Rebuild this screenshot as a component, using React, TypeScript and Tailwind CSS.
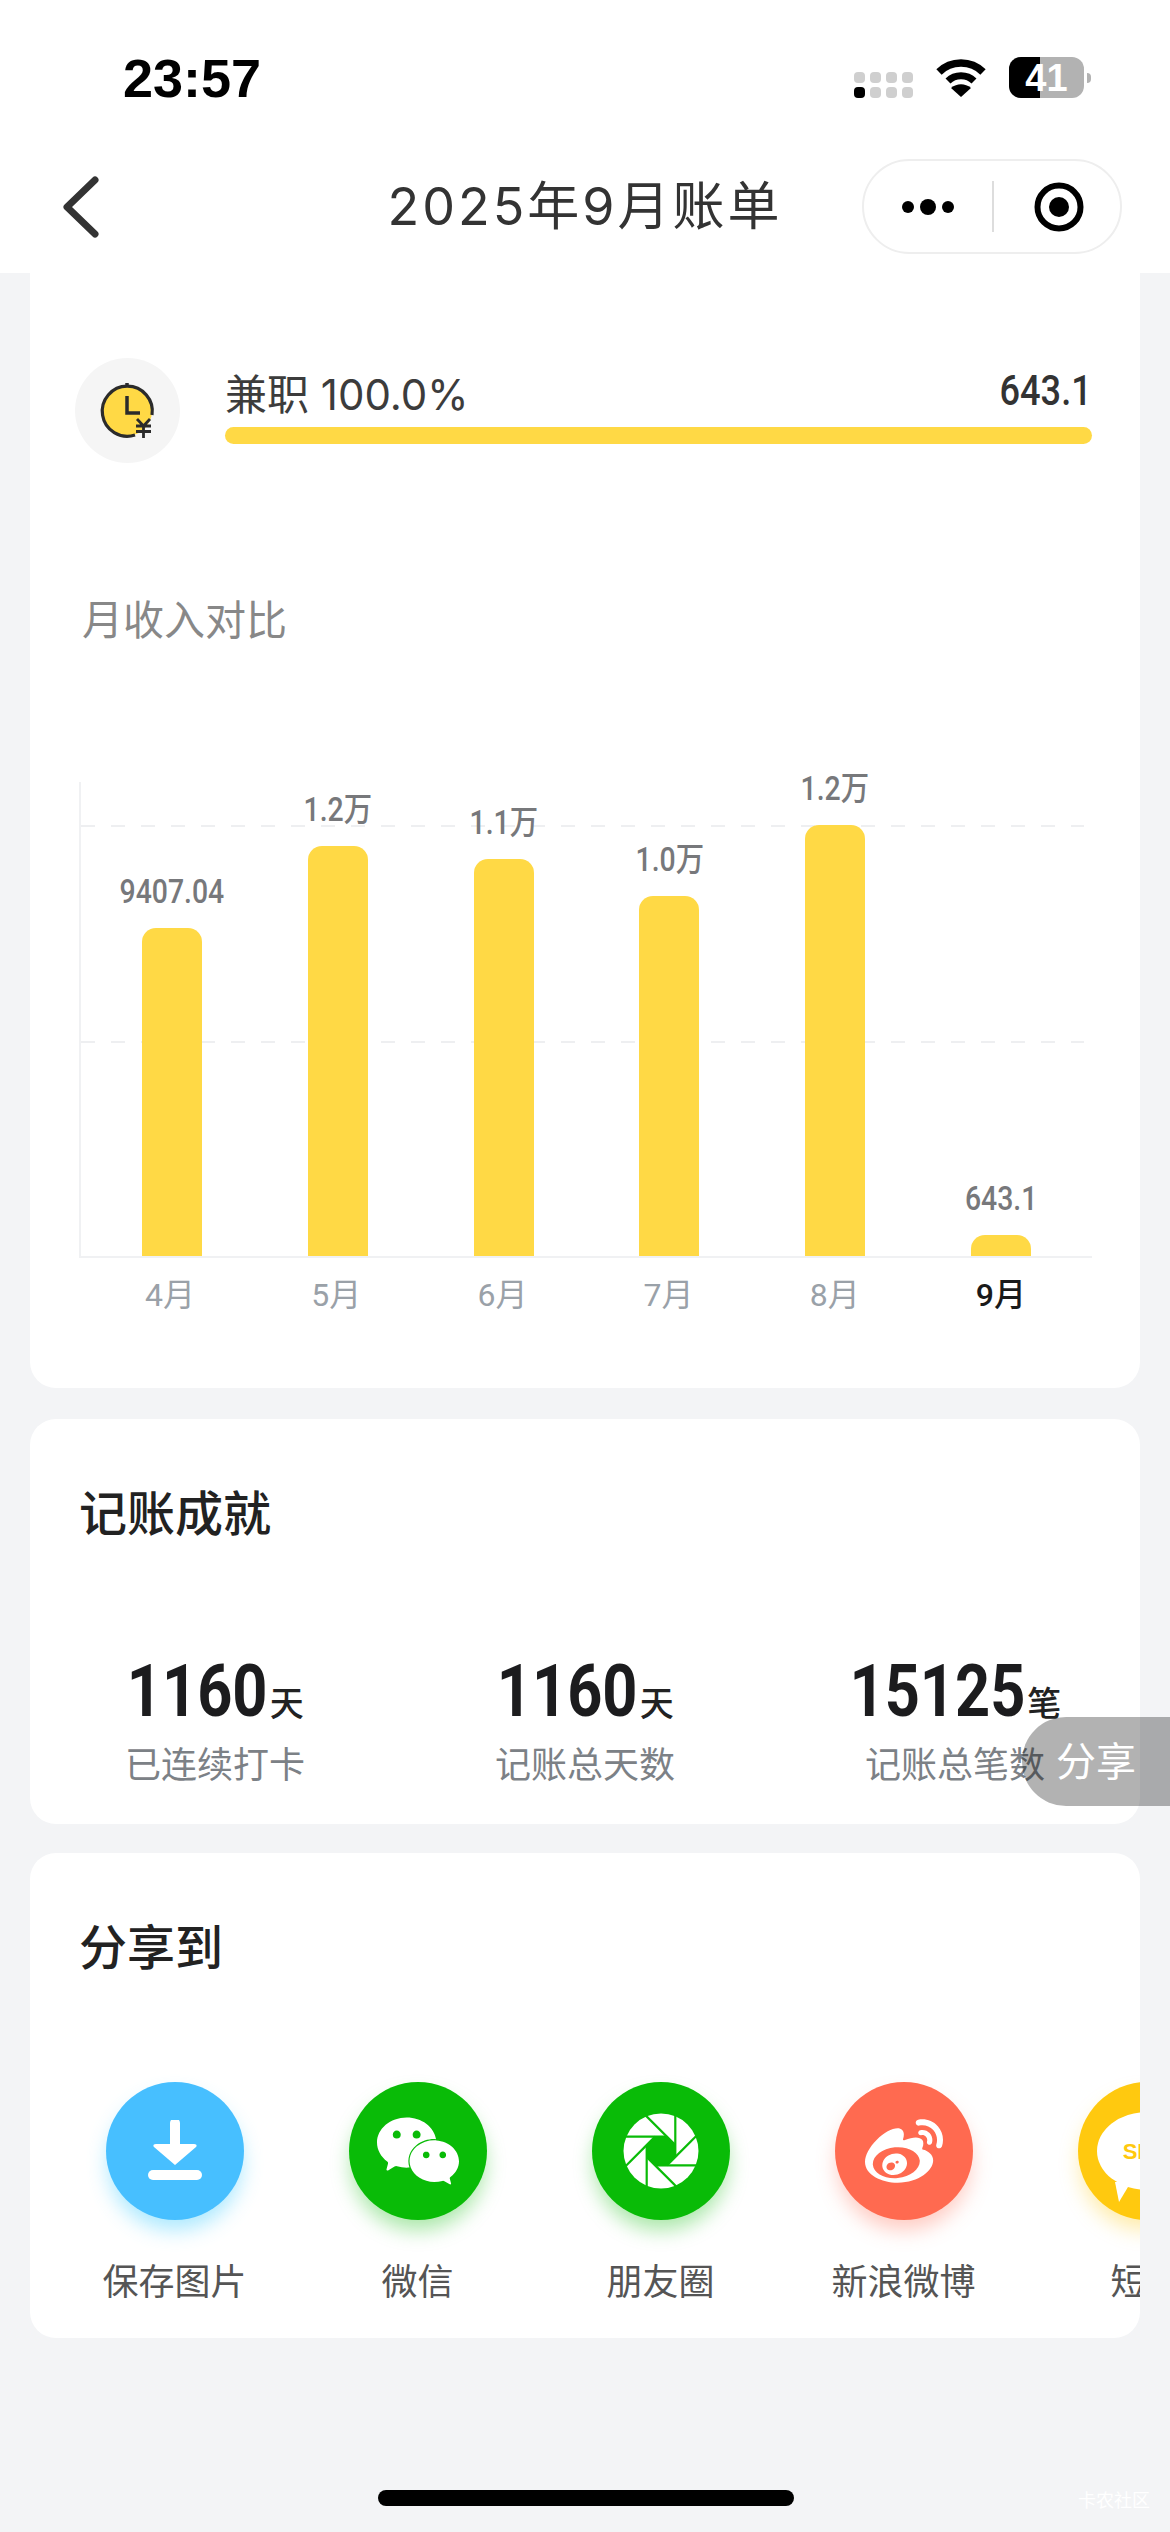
import { SiWechat, SiSinaweibo } from 'react-icons/si'

const cjk = "font-['Inter','Noto_Sans_CJK_SC',sans-serif]"
const din = "font-['Roboto','Noto_Sans_CJK_SC',sans-serif]"

const months = [
  { name: '4月', label: '9407.04', height: 328 },
  { name: '5月', label: '1.2万', height: 410 },
  { name: '6月', label: '1.1万', height: 397 },
  { name: '7月', label: '1.0万', height: 360 },
  { name: '8月', label: '1.2万', height: 431 },
  { name: '9月', label: '643.1', height: 21 },
]

const stats = [
  { value: '1160', unit: '天', label: '已连续打卡', shift: '-ml-[26px]' },
  { value: '1160', unit: '天', label: '记账总天数', shift: '-ml-[26px]' },
  { value: '15125', unit: '笔', label: '记账总笔数', shift: '-ml-[33px]' },
]

function StatusBar() {
  return (
    <div className="flex h-[150px] items-start justify-between pl-[123px] pr-[79px] pt-[50px]">
      <span className="font-['Liberation_Sans',sans-serif] text-[54px] leading-[56px] font-bold text-black">23:57</span>
      <div className="flex items-center gap-[23px] pt-[7px]">
        <div className="grid grid-cols-4 gap-x-[5px] gap-y-[4px] pt-[14px]">
          {[0, 1, 2, 3, 4, 5, 6, 7].map((i) => (
            <span key={i} className={i === 4 ? 'h-[11px] w-[11px] rounded-[4px] bg-black' : 'h-[11px] w-[11px] rounded-[4px] bg-[#cfcfcf]'} />
          ))}
        </div>
        <svg width="50" height="38" viewBox="0 0 50 38">
          <path d="M3 13C15 1 35 1 47 13" fill="none" stroke="#000" strokeWidth="7.5" />
          <path d="M12 22C19 15 31 15 38 22" fill="none" stroke="#000" strokeWidth="7" />
          <path d="M25 38L15 29C21 24 29 24 35 29Z" fill="#000" />
        </svg>
        <div className="flex items-center gap-[3px]">
          <div className="relative flex h-[41px] w-[75px] items-center justify-center overflow-hidden rounded-[12px] bg-[#b2b2b2]">
            <div className="absolute inset-y-0 left-0 w-[31px] bg-black" />
            <span className="relative font-['Liberation_Sans',sans-serif] text-[38px] leading-none font-bold text-white">41</span>
          </div>
          <div className="h-[10px] w-[4px] rounded-r-full bg-[#b2b2b2]" />
        </div>
      </div>
    </div>
  )
}

function NavBar() {
  return (
    <div className="grid h-[123px] grid-cols-[1fr_auto_1fr] items-start px-[48px] pt-[9px]">
      <svg width="38" height="62" viewBox="0 0 38 62" className="ml-[14px] mt-[17px]">
        <path d="M33 4L5 31L33 58" fill="none" stroke="#333" strokeWidth="7" strokeLinecap="round" strokeLinejoin="round" />
      </svg>
      <h1 className={`${cjk} mt-[16px] text-[52px] leading-[64px] font-normal tracking-[3px] text-[#333]`}>2025年9月账单</h1>
      <div className="flex h-[95px] w-[260px] items-center justify-self-end rounded-full border-2 border-[#eeeeee] pl-[37px]">
        <svg width="54" height="18" viewBox="0 0 54 18">
          <circle cx="7" cy="9" r="6" fill="#000" />
          <circle cx="27" cy="9" r="8" fill="#000" />
          <circle cx="47" cy="9" r="6" fill="#000" />
        </svg>
        <div className="ml-[37px] h-[51px] w-[2px] bg-[#dddddd]" />
        <svg width="50" height="50" viewBox="0 0 50 50" className="ml-[40px]">
          <circle cx="25" cy="25" r="21.5" fill="none" stroke="#000" strokeWidth="6" />
          <circle cx="25" cy="25" r="10" fill="#000" />
        </svg>
      </div>
    </div>
  )
}

function CategoryRow() {
  return (
    <div className="flex items-start pl-[45px] pr-[48px] pt-[85px]">
      <div className="flex h-[105px] w-[105px] shrink-0 items-center justify-center rounded-full bg-[#f5f5f5]">
        <svg width="58" height="60" viewBox="0 0 58 60">
          <circle cx="28" cy="30" r="25" fill="#ffd945" />
          <path d="M53 34A25 25 0 1 0 36 54" fill="none" stroke="#2b2b2b" strokeWidth="3.2" />
          <path d="M28 2V5" stroke="#2b2b2b" strokeWidth="3.5" />
          <path d="M28 15V32H41" fill="none" stroke="#2b2b2b" strokeWidth="3.5" />
          <path d="M38 38L44.5 45L51 38M37 45H52M37 50.5H52M44.5 45V57" fill="none" stroke="#2b2b2b" strokeWidth="2.8" />
        </svg>
      </div>
      <div className="ml-[45px] mt-[12px] flex-1">
        <div className="flex items-end justify-between">
          <span className={`${cjk} text-[42px] leading-[50px] text-[#3c3c3c]`}>兼职 100.0%</span>
          <span className={`${din} mb-[10px] inline-block origin-right scale-x-[0.84] text-[43px] leading-[40px] font-medium text-[#333]`}>643.1</span>
        </div>
        <div className="mt-[7px] h-[17px] rounded-full bg-[#ffd945]" />
      </div>
    </div>
  )
}

function IncomeChart() {
  return (
    <div className="pl-[49px] pr-[48px]">
      <div className="relative flex h-[476px] items-end border-b-2 border-l-2 border-[#f0f1f3] px-[8px]">
        <div className="absolute left-0 right-[8px] top-[43px] h-[2px] bg-[repeating-linear-gradient(90deg,#eeeff1_0,#eeeff1_14px,transparent_14px,transparent_30px)]" />
        <div className="absolute left-0 right-[8px] top-[259px] h-[2px] bg-[repeating-linear-gradient(90deg,#eeeff1_0,#eeeff1_14px,transparent_14px,transparent_30px)]" />
        {months.map((m) => (
          <div key={m.name} className="relative flex flex-1 flex-col items-center">
            <span className={`${din} mb-[18px] inline-block scale-x-[0.86] text-[33px] leading-[36px] font-medium text-[#77787b]`}>{m.label}</span>
            <div className="w-[60px] rounded-t-[14px] bg-[#ffd945]" style={{ height: m.height }} />
          </div>
        ))}
      </div>
      <div className="flex px-[8px] pt-[19px]">
        {months.map((m) => (
          <span
            key={m.name}
            className={
              m.name === '9月'
                ? `${din} flex-1 text-center text-[32px] leading-[36px] font-medium text-[#1a1a1a]`
                : `${din} flex-1 text-center text-[32px] leading-[36px] text-[#9aa1a8]`
            }
          >
            {m.name}
          </span>
        ))}
      </div>
    </div>
  )
}

function Aperture() {
  const angles = [0, 45, 90, 135, 180, 225, 270, 315]
  return (
    <svg width="76" height="76" viewBox="-38 -38 76 76">
      <circle cx="0" cy="0" r="37.5" fill="#fff" />
      <polygon
        points={angles.map((a) => `${15.2 * Math.cos(((a + 22.5) * Math.PI) / 180)},${15.2 * Math.sin(((a + 22.5) * Math.PI) / 180)}`).join(' ')}
        fill="#09bb07"
      />
      {angles.map((a) => (
        <line key={a} x1="14.3" y1="6" x2="14.3" y2="-45" stroke="#09bb07" strokeWidth="2.2" transform={`rotate(${a})`} />
      ))}
    </svg>
  )
}

function ShareItem({ label, circle, children }: { label: string; circle: string; children: React.ReactNode }) {
  return (
    <div className="flex w-[243px] shrink-0 flex-col items-center">
      <div className={`flex h-[138px] w-[138px] items-center justify-center overflow-hidden rounded-full ${circle}`}>{children}</div>
      <span className={`${cjk} mt-[40px] text-[36px] leading-[44px] text-[#555]`}>{label}</span>
    </div>
  )
}

export default function App() {
  return (
    <div className="relative h-[2532px] w-[1170px] overflow-hidden bg-[#f3f4f6]">
      <header className="bg-white">
        <StatusBar />
        <NavBar />
      </header>

      <div className="mx-[30px] h-[1115px] overflow-hidden rounded-b-[26px] bg-white">
        <CategoryRow />
        <h2 className={`${cjk} pl-[52px] pt-[130px] text-[41px] leading-[54px] text-[#888]`}>月收入对比</h2>
        <div className="pt-[135px]">
          <IncomeChart />
        </div>
      </div>

      <section className="mx-[30px] mt-[31px] h-[405px] rounded-[26px] bg-white">
        <h2 className={`${cjk} pl-[49px] pt-[64px] text-[48px] leading-[62px] font-medium text-[#222]`}>记账成就</h2>
        <div className="grid grid-cols-3 pt-[104px]">
          {stats.map((s, i) => (
            <div key={i} className="flex flex-col items-center">
              <div className="flex items-baseline">
                <span className={`${din} ${s.shift} inline-block origin-right scale-x-[0.84] text-[73px] leading-[84px] font-bold text-[#1c1c1e]`}>{s.value}</span>
                <span className={`${cjk} ml-[2px] text-[34px] font-medium text-[#222]`}>{s.unit}</span>
              </div>
              <span className={`${cjk} mt-[10px] text-[36px] leading-[44px] text-[#7c8186]`}>{s.label}</span>
            </div>
          ))}
        </div>
      </section>

      <section className="mx-[30px] mt-[29px] h-[485px] overflow-hidden rounded-[26px] bg-white">
        <h2 className={`${cjk} pl-[49px] pt-[64px] text-[48px] leading-[62px] font-medium text-[#222]`}>分享到</h2>
        <div className="flex pl-[23px] pt-[103px]">
          <ShareItem label="保存图片" circle="bg-[#47bfff] shadow-[0_12px_20px_-2px_rgba(71,207,255,0.45)]">
            <svg width="56" height="62" viewBox="0 0 56 62">
              <path d="M23 3a5 5 0 0 1 10 0v21h14c3 0 3 2 2 3L28 45L7 27c-1-1-1-3 2-3h14Z" fill="#fff" />
              <rect x="1" y="50" width="54" height="10" rx="5" fill="#fff" />
            </svg>
          </ShareItem>
          <ShareItem label="微信" circle="bg-[#09bb07] shadow-[0_12px_20px_-2px_rgba(9,187,7,0.35)]">
            <SiWechat size={82} color="#fff" />
          </ShareItem>
          <ShareItem label="朋友圈" circle="bg-[#09bb07] shadow-[0_12px_20px_-2px_rgba(9,187,7,0.35)]">
            <Aperture />
          </ShareItem>
          <ShareItem label="新浪微博" circle="bg-[#ff6a50] shadow-[0_12px_20px_-2px_rgba(255,106,80,0.35)]">
            <SiSinaweibo size={78} color="#fff" />
          </ShareItem>
          <ShareItem label="短信" circle="bg-[#ffc90f] shadow-[0_12px_20px_-2px_rgba(255,201,15,0.35)]">
            <div className="relative h-[78px] w-[100px] rounded-[50%] bg-white">
              <span className="flex h-full items-center justify-center font-['Liberation_Sans',sans-serif] text-[22px] font-bold text-[#ffc90f]">SMS</span>
              <div className="absolute bottom-[-12px] left-[18px] h-0 w-0 border-l-[4px] border-r-[12px] border-t-[20px] border-l-transparent border-r-transparent border-t-white" />
            </div>
          </ShareItem>
        </div>
      </section>

      {/* 悬浮分享按钮 */}
      <div className={`${cjk} absolute right-0 top-[1717px] flex h-[89px] w-[148px] items-center rounded-l-[44px] bg-black/30 pl-[34px] text-[40px] text-white`}>分享</div>

      <div className="absolute bottom-[26px] left-[378px] h-[16px] w-[416px] rounded-full bg-black" />
      <span className={`${cjk} absolute left-[1078px] top-[2490px] text-[18px] leading-[22px] text-white`}>卡农社区</span>
    </div>
  )
}
